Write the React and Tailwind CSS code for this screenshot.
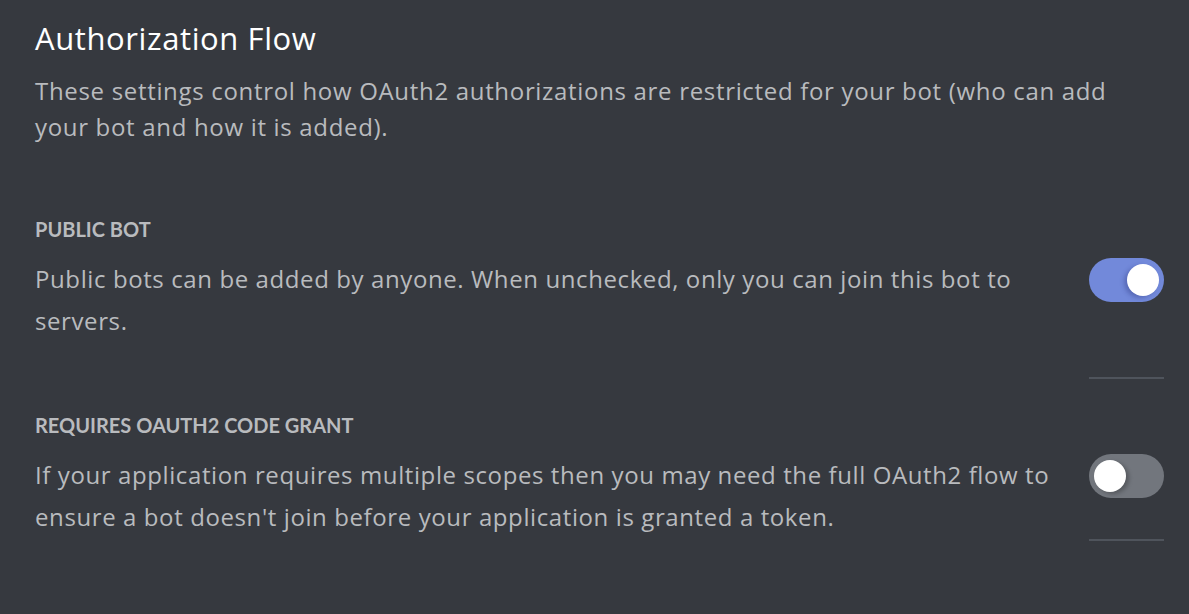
import React from "react";

function Toggle({ on }) {
  return (
    <div
      className={
        "relative h-[44px] w-[75px] shrink-0 rounded-full " +
        (on ? "bg-[#7289da]" : "bg-[#72767d]")
      }
    >
      <div
        className={
          "absolute top-[6px] h-[32px] w-[32px] rounded-full bg-white " +
          (on
            ? "right-[5px] shadow-[-3px_2px_4px_rgba(40,50,120,0.35)]"
            : "left-[5px] shadow-[3px_2px_4px_rgba(0,0,0,0.25)]")
        }
      />
    </div>
  );
}

function Setting({ label, text, on, gap, labelMt }) {
  return (
    <div className={labelMt}>
      <div className="font-['Lato',sans-serif] text-[20px] leading-[24px] font-bold text-[#b9bbbe]">
        {label}
      </div>
      <div className="mt-[17px] flex items-start gap-[20px]">
        <div className="flex-1 text-[24px] leading-[42px] tracking-[0.6px] text-[#b9bbbe]">
          {text}
        </div>
        <div className="flex w-[75px] shrink-0 flex-col">
          <Toggle on={on} />
          <div className={"h-[2px] w-[75px] bg-[#4f545c] " + gap} />
        </div>
      </div>
    </div>
  );
}

export default function App() {
  return (
    <div className="h-[614px] w-full overflow-hidden bg-[#36393f] pl-[35px] pr-[25px] pt-[18px] font-['Open_Sans',sans-serif]">
      <h1 className="text-[31px] leading-[40px] font-normal tracking-[0.6px] text-white">
        Authorization Flow
      </h1>
      <p className="mt-[15px] text-[24px] leading-[36px] tracking-[0.68px] text-[#b9bbbe]">
        These settings control how OAuth2 authorizations are restricted for your bot (who can add
        <br />
        your bot and how it is added).
      </p>
      <Setting
        labelMt="mt-[72px]"
        label="PUBLIC BOT"
        text={
          <>
            Public bots can be added by anyone. When unchecked, only you can join this bot to
            <br />
            servers.
          </>
        }
        on={true}
        gap="mt-[75px]"
      />
      <Setting
        labelMt="mt-[34px]"
        label="REQUIRES OAUTH2 CODE GRANT"
        text={
          <>
            If your application requires multiple scopes then you may need the full OAuth2 flow to
            <br />
            ensure a bot doesn't join before your application is granted a token.
          </>
        }
        on={false}
        gap="mt-[41px]"
      />
    </div>
  );
}
